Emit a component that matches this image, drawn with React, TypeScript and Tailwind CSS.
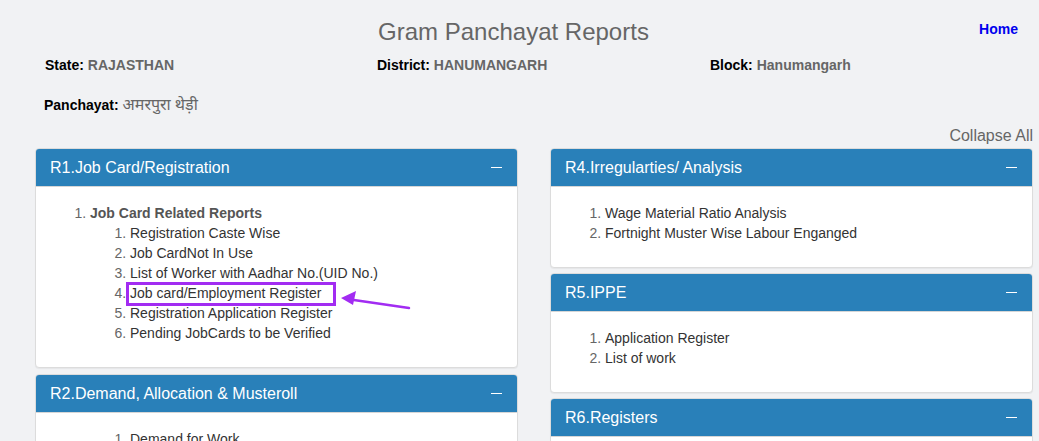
import React from 'react'

type Panel = {
  title: string
  heading?: string
  items: string[]
  nested?: boolean
  highlight?: number
}

const left: Panel[] = [
  {
    title: 'R1.Job Card/Registration',
    heading: 'Job Card Related Reports',
    items: [
      'Registration Caste Wise',
      'Job CardNot In Use',
      'List of Worker with Aadhar No.(UID No.)',
      'Job card/Employment Register',
      'Registration Application Register',
      'Pending JobCards to be Verified',
    ],
    highlight: 3,
  },
  {
    title: 'R2.Demand, Allocation & Musteroll',
    items: ['Demand for Work', 'Allocation for Work', 'Muster Roll'],
    nested: true,
  },
]

const right: Panel[] = [
  {
    title: 'R4.Irregularties/ Analysis',
    items: ['Wage Material Ratio Analysis', 'Fortnight Muster Wise Labour Enganged'],
  },
  { title: 'R5.IPPE', items: ['Application Register', 'List of work'] },
  { title: 'R6.Registers', items: ['Asset Register', 'Work Register'] },
]

function Item({ text, marked }: { text: string; marked?: boolean }) {
  return (
    <li className="marker:text-[#666]">
      <span className="relative text-[#333]">
        {text}
        {marked && (
          <>
            <span className="absolute left-[-4px] top-[-3px] w-[210px] h-[24px] border-[3px] border-[#a22cf2]" />
            <svg
              className="absolute left-[207px] top-[4px]"
              width="76"
              height="24"
              viewBox="0 0 76 24"
            >
              <line x1="10" y1="10" x2="72" y2="19" stroke="#a22cf2" strokeWidth="2.5" strokeLinecap="round" />
              <polygon points="4,9 19,2 16,16" fill="#a22cf2" />
            </svg>
          </>
        )}
      </span>
    </li>
  )
}

function Card({ p }: { p: Panel }) {
  return (
    <div className="bg-white border border-[#dcdcdc] rounded-[4px] shadow-[0_1px_1px_rgba(0,0,0,0.05)] overflow-hidden">
      <div className="bg-[#2980b9] border-b border-[#d6d6d6] px-[14px] py-[10px] flex items-center justify-between">
        <span className="text-white text-[16px] leading-[17px]">{p.title}</span>
        <span className="w-[11px] h-[1.5px] bg-white mr-[1px]" />
      </div>
      <div className="pl-[14px] pr-[15px] pt-[16px] pb-[24px] text-[14px] leading-[20px]">
        {p.heading ? (
          <ol className="list-decimal pl-[40px]">
            <li className="marker:text-[#666] marker:font-normal">
              <span className="font-bold text-[#555]">{p.heading}</span>
              <ol className="list-decimal pl-[40px]">
                {p.items.map((t, i) => (
                  <Item key={t} text={t} marked={i === p.highlight} />
                ))}
              </ol>
            </li>
          </ol>
        ) : (
          <ol className={p.nested ? 'list-decimal pl-[80px]' : 'list-decimal pl-[40px]'}>
            {p.items.map((t) => (
              <Item key={t} text={t} />
            ))}
          </ol>
        )}
      </div>
    </div>
  )
}

export default function App() {
  return (
    <div className="min-h-screen bg-[#f1f2f4] font-['Liberation_Sans',Arial,sans-serif] text-[#333]">
      <div className="grid grid-cols-[1fr_auto_1fr] pt-[18px] pr-[12px]">
        <div />
        <h1 className="text-[24px] leading-[28px] text-[#666]">Gram Panchayat Reports</h1>
        <div className="flex justify-end pr-[9px] pt-[3px]">
          <a href="#" className="text-[14px] leading-[16px] font-bold text-[#0000ee]">
            Home
          </a>
        </div>
      </div>

      <div className="grid grid-cols-[332px_333px_1fr] pl-[45px] mt-[9px] text-[14px] leading-[20px] font-bold">
        <div>
          <span className="text-black">State: </span>
          <span className="text-[#666]">RAJASTHAN</span>
        </div>
        <div>
          <span className="text-black">District: </span>
          <span className="text-[#666]">HANUMANGARH</span>
        </div>
        <div>
          <span className="text-black">Block: </span>
          <span className="text-[#666]">Hanumangarh</span>
        </div>
      </div>

      <div className="pl-[44px] mt-[19px] text-[14px] leading-[20px]">
        <span className="font-bold text-black">Panchayat: </span>
        <span className="text-[16px] text-[#666] font-['Noto_Sans','Liberation_Sans',sans-serif]">अमरपुरा थेड़ी</span>
      </div>

      <div className="flex justify-end pr-[6px] mt-[11px]">
        <span className="text-[16px] leading-[20px] text-[#666]">Collapse All</span>
      </div>

      <div className="grid grid-cols-[483px_483px] gap-x-[32px] pl-[35px] mt-[2px] pb-[20px] items-start">
        <div className="flex flex-col gap-[6px]">
          {left.map((p) => (
            <Card key={p.title} p={p} />
          ))}
        </div>
        <div className="flex flex-col gap-[5px]">
          {right.map((p) => (
            <Card key={p.title} p={p} />
          ))}
        </div>
      </div>
    </div>
  )
}
